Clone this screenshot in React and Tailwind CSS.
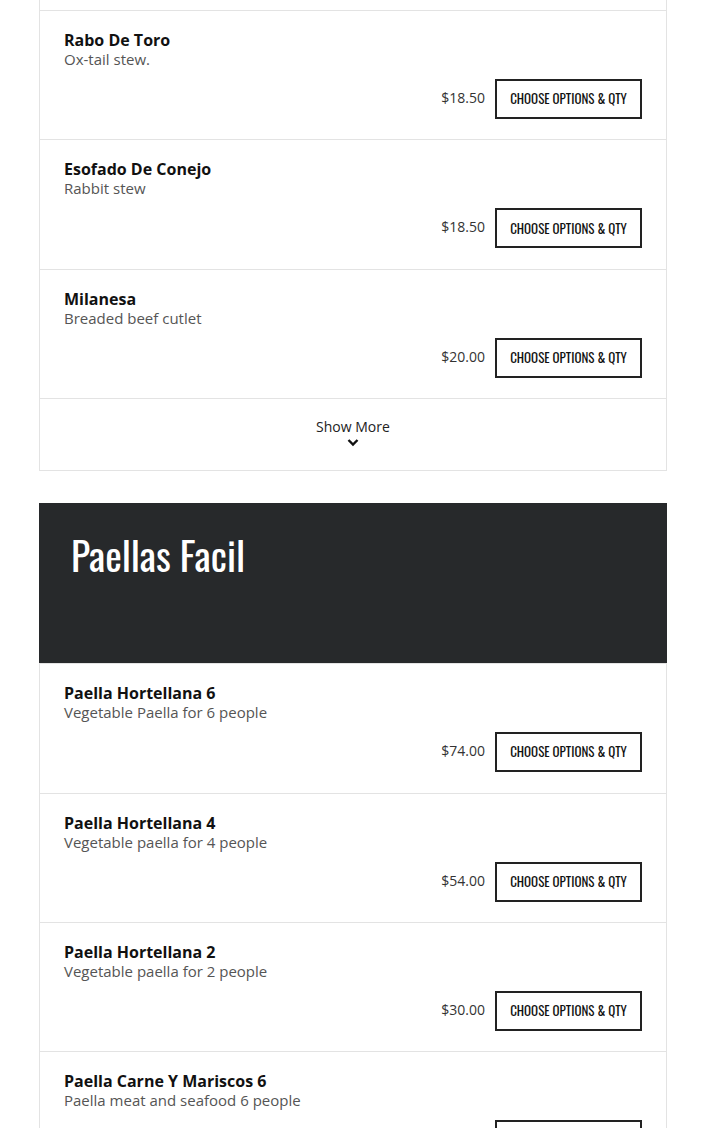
const sides = [
  { name: "Rabo De Toro", desc: "Ox-tail stew.", price: "$18.50" },
  { name: "Esofado De Conejo", desc: "Rabbit stew", price: "$18.50" },
  { name: "Milanesa", desc: "Breaded beef cutlet", price: "$20.00" },
];

const paellas = [
  { name: "Paella Hortellana 6", desc: "Vegetable Paella for 6 people", price: "$74.00" },
  { name: "Paella Hortellana 4", desc: "Vegetable paella for 4 people", price: "$54.00" },
  { name: "Paella Hortellana 2", desc: "Vegetable paella for 2 people", price: "$30.00" },
  { name: "Paella Carne Y Mariscos 6", desc: "Paella meat and seafood 6 people", price: "$92.00" },
];

const condensed = "font-['Oswald','Liberation_Sans_Narrow','DejaVu_Sans_Condensed',sans-serif]";

const MenuItem = ({ item }) => (
  <div className="border-t border-[#e3e3e3] px-[24px] pt-[19px] pb-[20.4px]">
    <h3 className="text-[16px] leading-[20px] font-bold text-[#111]">{item.name}</h3>
    <p className="text-[15px] leading-[19px] text-[#555]">{item.desc}</p>
    <div className="flex items-center justify-end gap-[10px] mt-[10px]">
      <span className="text-[14px] leading-[18px] mb-[2px] text-[#333]">{item.price}</span>
      <button
        className={`${condensed} h-[40px] w-[147px] border-2 border-[#222] text-[13px] uppercase text-[#111]`}
      >
        Choose Options &amp; Qty
      </button>
    </div>
  </div>
);

export default function App() {
  return (
    <div className="bg-white min-h-screen font-['Open_Sans',sans-serif] px-[39px] pb-10">
      <div className="w-[628px]">
        <div className="border-x border-b border-[#e3e3e3]">
          <div className="h-[10px]" />
          {sides.map((item) => (
            <MenuItem key={item.name} item={item} />
          ))}
          <div className="border-t border-[#e3e3e3] h-[72px] flex flex-col items-center pt-[18px]">
            <span className="text-[14px] leading-[20px] text-[#222]">Show More</span>
            <svg width="12" height="9" viewBox="0 0 12 9" className="mt-[1px]">
              <path d="M1.5 2 L6 6.5 L10.5 2" fill="none" stroke="#111" strokeWidth="2.4" />
            </svg>
          </div>
        </div>

        <div className="mt-[32px] bg-[#27292b] h-[160px] px-[32px] pt-[24px]">
          <h2 className={`${condensed} text-white text-[39.5px] leading-[54px]`}>
            Paellas Facil
          </h2>
        </div>

        <div className="border-x border-b border-[#e3e3e3]">
          {paellas.map((item) => (
            <MenuItem key={item.name} item={item} />
          ))}
        </div>
      </div>
    </div>
  );
}
